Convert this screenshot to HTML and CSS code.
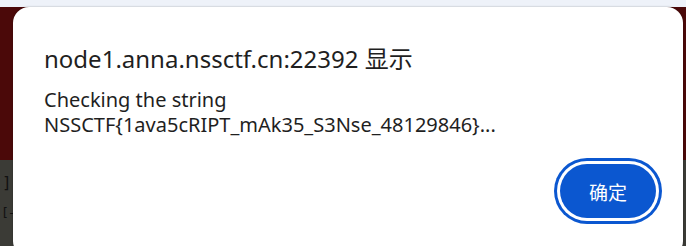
FILE: index.html
```html
<!DOCTYPE html>
<html>
<head>
<meta charset="utf-8">
<link rel="stylesheet" href="styles.css">
</head>
<body>
<div class="topbar"></div>
<div class="page">
  <div class="page-red"></div>
  <div class="page-dark">
    <div class="code">]</div>
    <div class="code code2">[-</div>
  </div>
</div>
<div class="dialog">
  <div class="title">node1.anna.nssctf.cn:22392 显示</div>
  <div class="message">Checking the string<br>NSSCTF{1ava5cRIPT_mAk35_S3Nse_48129846}...</div>
  <div class="actions">
    <button class="ok">确定</button>
  </div>
</div>
</body>
</html>
```
FILE: styles.css
```css
html, body {
  margin: 0;
  padding: 0;
  width: 686px;
  height: 246px;
  overflow: hidden;
  background: #eef2f9;
  font-family: "Noto Sans", "Noto Sans CJK SC", sans-serif;
}
.topbar {
  height: 7px;
  background: #eef2f9;
}
.page {
  display: flex;
  flex-direction: column;
  height: 239px;
}
.page-red {
  height: 153px;
  background: #4b0909;
}
.page-dark {
  flex: 1;
  background: #3b3b36;
  padding-top: 8px;
}
.code {
  font-family: "DejaVu Sans Mono", monospace;
  font-size: 16px;
  line-height: 30px;
  color: #111;
  padding-left: 2px;
}
.code2 {
  font-size: 13px;
  padding-left: 1px;
  letter-spacing: -1px;
}
.dialog {
  position: absolute;
  left: 13px;
  top: 7px;
  width: 670px;
  height: 250px;
  background: #fff;
  border-radius: 16px;
  box-shadow: 0 0 2px rgba(0,0,0,0.35);
  box-sizing: border-box;
  padding: 37px 24px 0 31px;
}
.title {
  font-size: 24px;
  line-height: 30px;
  color: #1f1f1f;
}
.message {
  margin-top: 13px;
  font-size: 20px;
  line-height: 25px;
  color: #1f1f1f;
}
.actions {
  display: flex;
  justify-content: flex-end;
  margin-top: 27px;
}
.ok {
  width: 96px;
  height: 54px;
  border-radius: 27px;
  border: none;
  background: #0b57d0;
  color: #fff;
  font-family: "Noto Sans CJK SC", sans-serif;
  font-size: 19px;
  box-shadow: 0 0 0 3px #fff, 0 0 0 6px #0b57d0;
  margin-right: 3px;
}
```
